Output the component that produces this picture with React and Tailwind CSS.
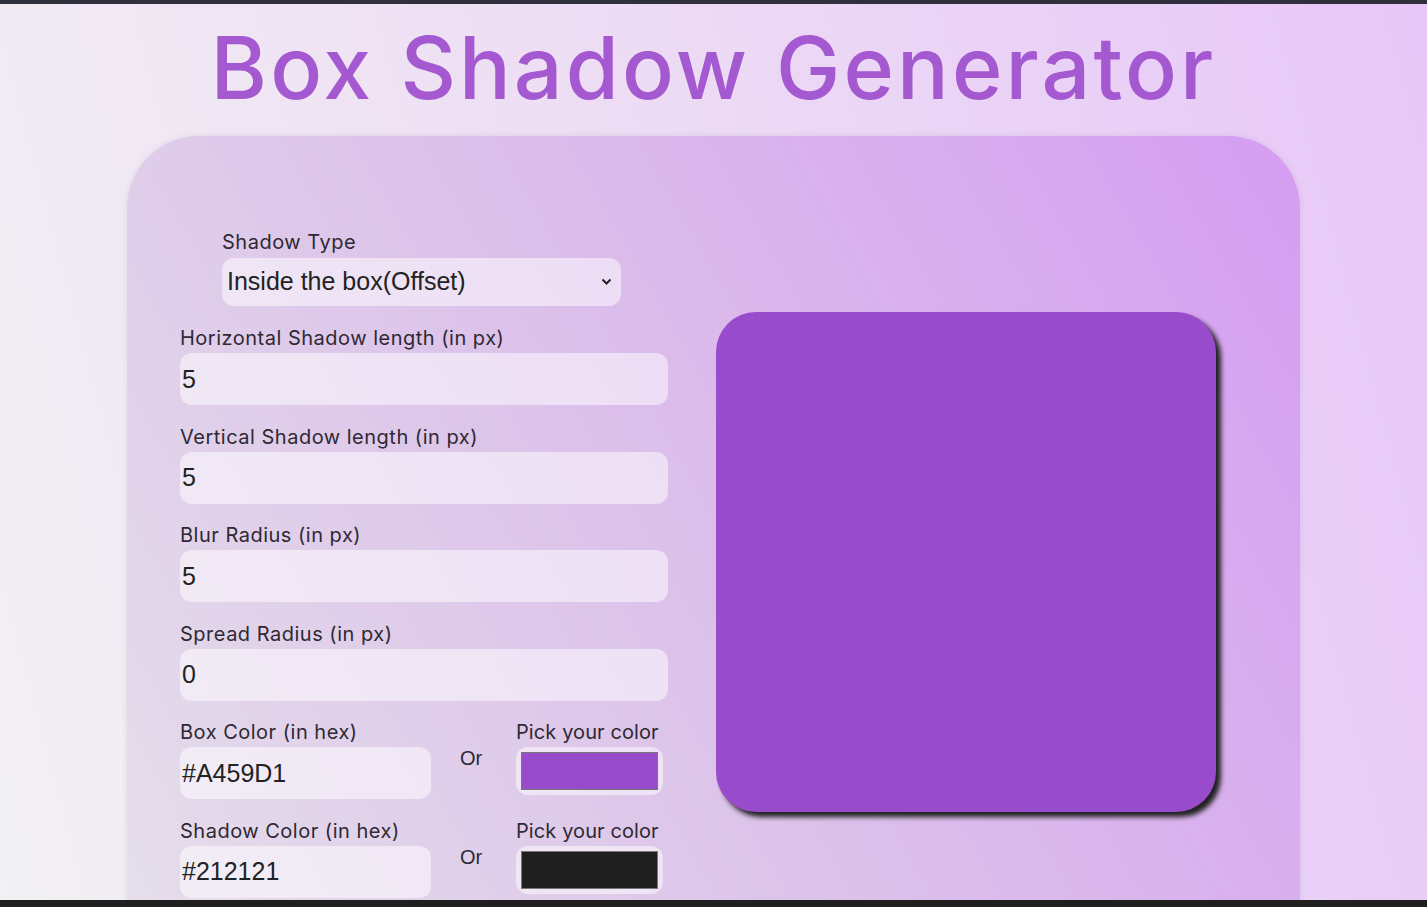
import React from 'react';

const fields = [
  { label: 'Horizontal Shadow length (in px)', value: '5' },
  { label: 'Vertical Shadow length (in px)', value: '5' },
  { label: 'Blur Radius (in px)', value: '5' },
  { label: 'Spread Radius (in px)', value: '0' },
];

const colors = [
  { label: 'Box Color (in hex)', value: '#A459D1', swatch: 'bg-[#984ccb]' },
  { label: 'Shadow Color (in hex)', value: '#212121', swatch: 'bg-[#1f1f1f]' },
];

const labelCls = "h-[30px] text-[20px] leading-[30px] text-[#2e2933] font-['Inter',sans-serif] tracking-[0.5px]";
const inputCls = "h-[52px] w-full rounded-[12px] bg-white/50 px-[2px] text-[25px] text-[#222] font-['Liberation_Sans',Arial,sans-serif] outline-none";

function Field({ label, value }) {
  return (
    <div className="flex flex-col">
      <label className={labelCls}>{label}</label>
      <input className={inputCls} defaultValue={value} />
    </div>
  );
}

function ColorRow({ label, value, swatch }) {
  return (
    <div className="flex">
      <div className="flex w-[251px] flex-col">
        <label className={labelCls}>{label}</label>
        <input className={inputCls} defaultValue={value} />
      </div>
      <div className="w-[85px] pl-[29px] pt-[29px] text-[20px] leading-[24px] text-[#2e2933] font-['Liberation_Sans',Arial,sans-serif]">
        Or
      </div>
      <div className="flex flex-col">
        <label className="h-[30px] text-[20px] leading-[30px] tracking-[0.1px] text-[#2e2933] font-['Inter',sans-serif]">Pick your color</label>
        <div className="h-[48px] w-[147px] rounded-[12px] bg-white/50 p-[5px]">
          <div className={`h-full w-[137px] border border-[#777] ${swatch}`} />
        </div>
      </div>
    </div>
  );
}

export default function App() {
  return (
    <div className="min-h-screen bg-[linear-gradient(75deg,#f2f1f3_0%,#eedff4_45%,#e7c7f8_100%)] font-['Inter',sans-serif]">
      <div className="h-[4px] bg-[#2f303c]" />

      <h1 className="pt-[9px] text-center text-[86px] font-medium leading-[110px] tracking-[3.1px] text-[#a459d1]">
        Box Shadow Generator
      </h1>

      {/* main panel */}
      <div className="mx-auto mt-[13px] flex w-[1173px] items-center gap-[48px] rounded-t-[72px] bg-[linear-gradient(60deg,#e5dfea_0%,#dcc2ea_45%,#d59df2_100%)] pb-[60px] pl-[53px] pt-[91px] shadow-[0_0_6px_rgba(0,0,0,0.08)]">
        <div className="flex w-[488px] flex-col gap-[16.5px]">
          <div className="mb-[0.5px] flex flex-col pl-[42px]">
            <label className={labelCls}>Shadow Type</label>
            <div className="relative mt-[1px] w-[399px]">
              <select className="h-[48px] w-full appearance-none rounded-[12px] bg-white/50 pl-[5px] text-[25px] text-[#222] font-['Liberation_Sans',Arial,sans-serif] outline-none">
                <option>Inside the box(Offset)</option>
                <option>Outside the box(Inset)</option>
              </select>
              <svg className="pointer-events-none absolute right-[9px] top-[20px]" width="11" height="8" viewBox="0 0 11 8">
                <path d="M1.5 1.5 L5.5 5.5 L9.5 1.5" fill="none" stroke="#222" strokeWidth="2" />
              </svg>
            </div>
          </div>

          {fields.map((f) => (
            <Field key={f.label} {...f} />
          ))}

          {colors.map((c) => (
            <ColorRow key={c.label} {...c} />
          ))}
        </div>

        {/* preview */}
        <div className="h-[500px] w-[500px] rounded-[40px] bg-[#984ccb] shadow-[5px_5px_5px_#212121]" />
      </div>

      <div className="fixed bottom-0 left-0 right-0 h-[7px] bg-[#1f1f1f]" />
    </div>
  );
}
